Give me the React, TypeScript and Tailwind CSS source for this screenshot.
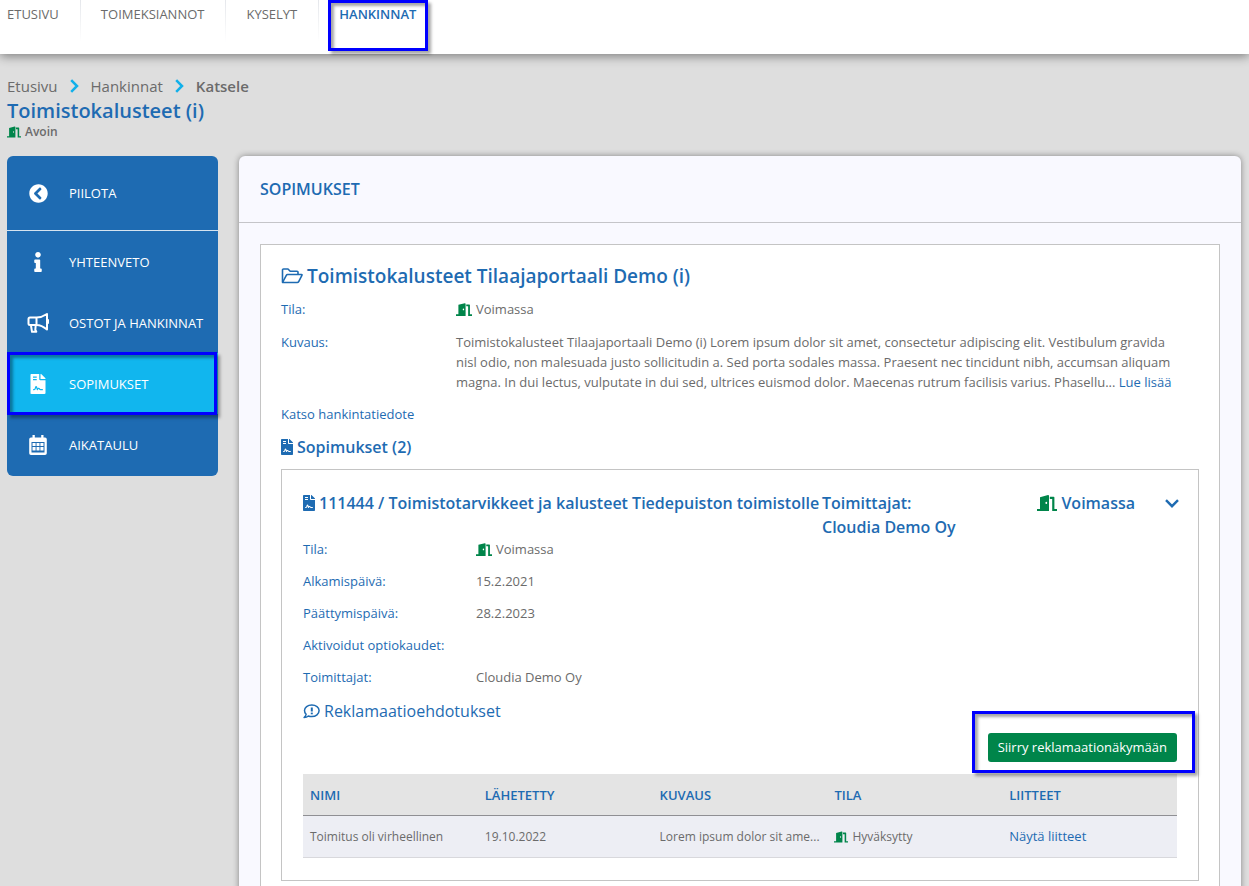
import type { ReactNode } from "react";
import { FaChevronCircleLeft, FaFileContract, FaInfo } from "react-icons/fa";

type IconProps = { className?: string };

const navItems = ["ETUSIVU", "TOIMEKSIANNOT", "KYSELYT", "HANKINNAT"];

const columns = ["NIMI", "LÄHETETTY", "KUVAUS", "TILA", "LIITTEET"];

function DoorIcon({ className }: IconProps) {
  return (
    <svg viewBox="0 0 20 16" className={className} fill="#00854a" aria-hidden="true">
      <path fillRule="evenodd" d="M3 2.2 11 .1Q12 0 12 .9V16H0v-2h3zM9.3 6.8a.9 1.100 0 1 0 0 2.200.9 1.100 0 0 0 0-2.200z" />
      <path d="M12.800 1.700H16.600Q17.400 1.700 17.400 2.500V14H20v2h-4.800V3.900h-2.400z" />
    </svg>
  );
}

function BullhornIcon({ className }: IconProps) {
  return (
    <svg viewBox="0 0 22 20" className={className} fill="none" stroke="currentColor" strokeWidth="2" strokeLinejoin="round" aria-hidden="true">
      <path d="M9.5 4.5H3A1.5 1.5 0 0 0 1.5 6v4.500A1.500 1.500 0 0 0 3 12h6.500M9.500 4.500V12M9.500 4.500C13.500 4.500 17 3 20 1v15.500c-3-2.500-6.500-4.500-10.500-4.500" />
      <path d="M4 12.500 5 18.800h4.300l-1-2 .4-4.300" />
      <path d="M21 7v3" strokeLinecap="round" />
    </svg>
  );
}

function CalendarIcon({ className }: IconProps) {
  return (
    <svg viewBox="0 0 18 20" className={className} fill="currentColor" aria-hidden="true">
      <path
        fillRule="evenodd"
        d="M3.500 0h2.300v2.500h6.400V0h2.300v2.500H16A1.800 1.800 0 0 1 17.800 4.300v13.900A1.800 1.800 0 0 1 16 20H2A1.800 1.800 0 0 1 .2 18.200V4.300A1.800 1.800 0 0 1 2 2.500h1.500zM2.500 7v10.500h13V7z"
      />
      <path d="M3.500 8h3.100v3H3.500zM7.500 8h3v3h-3zM11.400 8h3.100v3h-3.100zM3.500 12h3.100v3.500H3.500zM7.500 12h3v3.500h-3zM11.400 12h3.100v3.500h-3.100z" />
    </svg>
  );
}

function FolderIcon({ className }: IconProps) {
  return (
    <svg viewBox="0 0 22 16" className={className} fill="none" stroke="currentColor" strokeWidth="1.600" strokeLinejoin="round" aria-hidden="true">
      <path d="M1.500 14V2A1 1 0 0 1 2.500 1H7l2.200 2.200H16a1 1 0 0 1 1 1v2.300" />
      <path d="M1.500 14.500 5.300 7.300a1.500 1.500 0 0 1 1.300-.8H20.500q.8 0 .4.8l-3.200 6.300a1.700 1.700 0 0 1-1.500.9z" />
    </svg>
  );
}

function CommentIcon({ className }: IconProps) {
  return (
    <svg viewBox="0 0 17 15" className={className} fill="none" stroke="currentColor" strokeWidth="1.500" strokeLinejoin="round" aria-hidden="true">
      <path d="M8.800 1C4.700 1 1.500 3.400 1.500 6.600c0 1.500.6 2.800 1.600 3.800-.3 1.300-1 2.300-2 3.200 1.700 0 3.200-.6 4.300-1.600 1 .4 2.200.6 3.400.6 4.100 0 7.300-2.700 7.300-6S12.900 1 8.800 1z" />
      <path d="M8.800 3.500v4" strokeWidth="2" />
      <path d="M8.800 8.600v1.700" strokeWidth="2" />
    </svg>
  );
}

function ChevronIcon({ className }: IconProps) {
  return (
    <svg viewBox="0 0 14 9" className={className} fill="none" stroke="currentColor" strokeWidth="2.400" aria-hidden="true">
      <path d="M1 1.200 7 7.200l6-6" />
    </svg>
  );
}

function CrumbArrow() {
  return (
    <svg viewBox="0 0 9 14" className="h-3.5 w-[9px] text-[#11b0ea]" fill="none" stroke="currentColor" strokeWidth="2.500" aria-hidden="true">
      <path d="M1.200 1.200 7 7l-5.800 5.800" />
    </svg>
  );
}

function Highlight({ className }: IconProps) {
  return (
    <span
      className={`pointer-events-none absolute border-3 border-[#0000ff] shadow-[3px_3px_3px_rgba(0,0,0,0.35),inset_3px_3px_3px_rgba(0,0,0,0.35)] ${className}`}
    />
  );
}

function Field({ label, nested, children }: { label: string; nested?: boolean; children?: ReactNode }) {
  return (
    <div className="flex text-[13px] leading-5">
      <dt className={`shrink-0 text-[#1e6bb2] ${nested ? "w-[173px]" : "w-[175px]"}`}>{label}</dt>
      <dd className="min-w-0 pr-6">{children}</dd>
    </div>
  );
}

function Status({ label }: { label: string }) {
  return (
    <span className="flex items-center gap-1">
      <DoorIcon className="h-[13px] w-4" />
      {label}
    </span>
  );
}

function SideItem({ icon, label, active }: { icon: ReactNode; label: string; active?: boolean }) {
  return (
    <li className="relative">
      <a href="#" className={`flex h-[61px] items-center ${active ? "bg-[#11b6ee]" : ""}`}>
        <span className="flex w-[62px] shrink-0 justify-center">{icon}</span>
        <span className="pt-0.5">{label}</span>
      </a>
      {active && <Highlight className="-inset-y-px right-px left-0" />}
    </li>
  );
}

export default function App() {
  return (
    <div className="h-screen overflow-hidden bg-[#dedede] font-['Open_Sans','Noto_Sans',sans-serif] text-[13px] text-[#6b6b6b]">
      <header className="h-[54px] bg-white shadow-[0_2px_10px_rgba(0,0,0,0.45)]">
        <nav className="flex pl-[7px]">
          {navItems.map((item, i) => (
            <div key={item} className="relative flex">
              {i > 0 && <span className="h-[42px] w-px bg-linear-to-b from-gray-200 to-white" />}
              <a
                href="#"
                className={`pt-1 leading-5 ${i > 0 ? "pl-5" : ""} ${i === 3 ? "font-semibold text-[#1e6bb2]" : "pr-[21px]"}`}
              >
                {item}
              </a>
              {i === 3 && <Highlight className="top-0 -right-3 left-2.5 h-[51px]" />}
            </div>
          ))}
        </nav>
      </header>

      <div className="px-[7px] pt-[22px]">
        <nav className="flex items-center gap-3 text-[15px] leading-5">
          <a href="#">Etusivu</a>
          <CrumbArrow />
          <a href="#">Hankinnat</a>
          <CrumbArrow />
          <span className="font-semibold">Katsele</span>
        </nav>
        <h1 className="pt-0.5 text-xl leading-[26px] font-semibold text-[#1e6bb2]">Toimistokalusteet (i)</h1>
        <p className="flex items-center gap-1 text-xs leading-4 font-semibold">
          <DoorIcon className="h-3 w-3.5" />
          Avoin
        </p>
      </div>

      <div className="flex items-start gap-[21px] pt-4 pr-2 pl-[7px]">
        <aside className="w-[211px] shrink-0 rounded-md bg-[#1e6bb2] pb-px text-white">
          <button type="button" className="flex h-[75px] w-full items-center border-b border-[#d5e3f0] text-left">
            <span className="flex w-[62px] justify-center">
              <FaChevronCircleLeft className="size-[19px]" />
            </span>
            <span className="pt-0.5">PIILOTA</span>
          </button>
          <ul>
            <SideItem icon={<FaInfo className="size-5" />} label="YHTEENVETO" />
            <SideItem icon={<BullhornIcon className="h-5 w-[22px]" />} label="OSTOT JA HANKINNAT" />
            <SideItem icon={<FaFileContract className="size-5" />} label="SOPIMUKSET" active />
            <SideItem icon={<CalendarIcon className="h-5 w-[18px]" />} label="AIKATAULU" />
          </ul>
        </aside>

        <main className="min-w-0 flex-1 rounded-t-md bg-[#f9f9ff] shadow-[0_0_6px_rgba(0,0,0,0.4)]">
          <h2 className="border-b border-[#c5c5c9] px-[21px] py-[21px] text-base leading-6 font-semibold text-[#1e6bb2]">
            SOPIMUKSET
          </h2>
          <div className="p-[21px]">
            <section className="border border-[#c4c4c4] bg-white px-5 pt-[15px] pb-10">
              <h3 className="flex items-center gap-1 text-[19px] leading-8 font-semibold text-[#1e6bb2]">
                <FolderIcon className="h-4 w-[22px]" />
                Toimistokalusteet Tilaajaportaali Demo (i)
              </h3>
              <dl className="mt-[7px] space-y-[13px]">
                <Field label="Tila:">
                  <Status label="Voimassa" />
                </Field>
                <Field label="Kuvaus:">
                  <span>
                    Toimistokalusteet Tilaajaportaali Demo (i) Lorem ipsum dolor sit amet, consectetur adipiscing elit.
                    Vestibulum gravida nisl odio, non malesuada justo sollicitudin a. Sed porta sodales massa. Praesent
                    nec tincidunt nibh, accumsan aliquam magna. In dui lectus, vulputate in dui sed, ultrices euismod
                    dolor. Maecenas rutrum facilisis varius. Phasellu...
                  </span>{" "}
                  <a href="#" className="whitespace-nowrap text-[#1e6bb2]">
                    Lue lisää
                  </a>
                </Field>
              </dl>
              <a href="#" className="mt-3 block leading-5 text-[#1e6bb2]">
                Katso hankintatiedote
              </a>
              <h4 className="mt-[11px] flex items-center gap-1 text-base leading-6 font-semibold text-[#1e6bb2]">
                <FaFileContract className="h-4 w-3" />
                Sopimukset (2)
              </h4>

              <article className="mt-2.5 border border-[#c4c4c4] px-[21px] pt-[21px] pb-[22px]">
                <div className="flex items-start text-base leading-6 font-semibold text-[#1e6bb2]">
                  <h5 className="flex w-[519px] shrink-0 items-center gap-1 whitespace-nowrap">
                    <FaFileContract className="h-4 w-3" />
                    111444 / Toimistotarvikkeet ja kalusteet Tiedepuiston toimistolle
                  </h5>
                  <p className="flex-1">
                    Toimittajat:
                    <br />
                    Cloudia Demo Oy
                  </p>
                  <p className="flex items-center gap-1">
                    <DoorIcon className="h-4 w-5" />
                    Voimassa
                  </p>
                  <button type="button" aria-label="Sulje" className="-mr-0.5 ml-[30px] flex h-6 items-center">
                    <ChevronIcon className="h-[9px] w-3.5" />
                  </button>
                </div>
                <dl className="space-y-3">
                  <Field nested label="Tila:">
                    <Status label="Voimassa" />
                  </Field>
                  <Field nested label="Alkamispäivä:">
                    15.2.2021
                  </Field>
                  <Field nested label="Päättymispäivä:">
                    28.2.2023
                  </Field>
                  <Field nested label="Aktivoidut optiokaudet:" />
                  <Field nested label="Toimittajat:">
                    Cloudia Demo Oy
                  </Field>
                </dl>
                <h5 className="mt-3 flex items-center gap-1 text-base leading-6 text-[#1e6bb2]">
                  <CommentIcon className="h-[15px] w-[17px]" />
                  Reklamaatioehdotukset
                </h5>
                <div className="mt-2.5 flex justify-end">
                  <div className="relative">
                    <button type="button" className="h-[29px] rounded-[3px] bg-[#00854a] px-2.5 text-white">
                      Siirry reklamaationäkymään
                    </button>
                    <Highlight className="-top-[22px] -right-[18px] -bottom-[11px] -left-4" />
                  </div>
                </div>
                <table className="mt-3 w-full table-fixed text-left">
                  <thead>
                    <tr className="h-[41px] border-b border-[#8f8f93] bg-[#e4e4e4] text-[#1e6bb2]">
                      {columns.map((column) => (
                        <th key={column} className="px-[7px] pt-0.5 font-semibold">
                          {column}
                        </th>
                      ))}
                    </tr>
                  </thead>
                  <tbody>
                    <tr className="h-[42px] border-b border-[#d8d8dc] bg-[#edeef4] text-xs">
                      <td className="px-[7px] pt-px">Toimitus oli virheellinen</td>
                      <td className="px-[7px] pt-px">19.10.2022</td>
                      <td className="px-[7px] pt-px whitespace-nowrap">Lorem ipsum dolor sit ame...</td>
                      <td className="px-[7px] pt-px">
                        <span className="flex items-center gap-1">
                          <DoorIcon className="h-3 w-3.5" />
                          Hyväksytty
                        </span>
                      </td>
                      <td className="px-[7px] pt-px text-[13px]">
                        <a href="#" className="text-[#1e6bb2]">
                          Näytä liitteet
                        </a>
                      </td>
                    </tr>
                  </tbody>
                </table>
              </article>
            </section>
          </div>
        </main>
      </div>
    </div>
  );
}
